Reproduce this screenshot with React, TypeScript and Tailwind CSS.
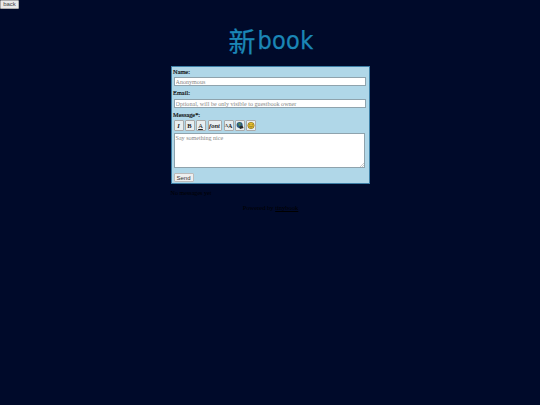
export default function App() {
  return (
    <div className="min-h-[405px] w-[540px] bg-[#000a2a] font-['Liberation_Serif',serif] text-black">
      <button className="block h-[9px] w-[19px] rounded-[1px] border border-[#aaa] bg-[#e9e9e9] font-['Liberation_Sans',sans-serif] text-[6px] leading-[7px] text-[#444]">
        back
      </button>

      {/* Logo */}
      <div className="mt-[14px] flex h-[36px] items-center justify-center gap-[2px] pl-[2px] text-[#1b86b6] [-webkit-text-stroke:0.25px_#1b86b6]">
        <span className="font-['Noto_Sans_CJK_SC',sans-serif] text-[27px] leading-[36px]">新</span>
        <span className="font-['DejaVu_Sans',sans-serif] text-[25px] leading-[36px] tracking-[0.3px] [font-stretch:condensed]">
          book
        </span>
      </div>

      {/* Form */}
      <div className="mx-auto mt-[7px] flex h-[118px] w-[199px] flex-col border border-[#3d7fa6] bg-[#b0d7e8] pl-[1px] pt-[1px] text-[6.3px] leading-[8px]">
        <label className="ml-[0.6px] text-[#111] [-webkit-text-stroke:0.2px_#111]">Name:</label>
        <input
          placeholder="Anonymous"
          className="ml-[1px] mt-[1px] h-[9px] w-[192px] border border-[#8fa3ad] bg-white px-[1px] text-[6.1px] leading-[7px] placeholder:text-[#888]"
        />
        <label className="ml-[0.6px] mt-[3px] text-[#111] [-webkit-text-stroke:0.2px_#111]">Email:</label>
        <input
          placeholder="Optional, will be only visible to guestbook owner"
          className="ml-[1px] mt-[2px] h-[9px] w-[192px] border border-[#8fa3ad] bg-white px-[1px] text-[6.1px] leading-[7px] placeholder:text-[#888]"
        />
        <label className="ml-[0.6px] mt-[3px] text-[#111] [-webkit-text-stroke:0.2px_#111]">Message*:</label>

        {/* Toolbar */}
        <div className="ml-[1px] mt-[1px] flex gap-[1px]">
          <ToolButton className="w-[10px] font-bold italic">I</ToolButton>
          <ToolButton className="w-[10px] font-bold">B</ToolButton>
          <ToolButton className="w-[10px] text-[#3a4ea0] underline">A</ToolButton>
          <ToolButton className="ml-[1px] w-[14px] text-[5px] font-bold italic">font</ToolButton>
          <ToolButton className="ml-[1px] w-[10px] font-bold">
            <span className="text-[4.5px]">A</span>
            <span className="text-[6px]">A</span>
          </ToolButton>
          <ToolButton className="w-[10px]">
            <svg viewBox="0 0 10 10" className="h-[9px] w-[9px]">
              <circle cx="4.5" cy="4.5" r="3.8" fill="#2c5c82" />
              <path d="M2.5 2.5 L5.5 2 L6 4 L4 5.5 Z" fill="#5a8a4a" />
              <path d="M4 6.5 L8 5 L9.5 8 L5 9.5 Z" fill="#2a2a2a" />
            </svg>
          </ToolButton>
          <ToolButton className="w-[10px]">
            <svg viewBox="0 0 10 10" className="h-[9px] w-[9px]">
              <circle cx="5" cy="5" r="4" fill="#e8c02c" stroke="#6e5a12" strokeWidth="0.7" />
              <circle cx="3.6" cy="4" r="0.6" fill="#333" />
              <circle cx="6.4" cy="4" r="0.6" fill="#333" />
              <path d="M3 6 Q5 8 7 6" fill="none" stroke="#333" strokeWidth="0.7" />
            </svg>
          </ToolButton>
        </div>

        <div className="relative ml-[1px] mt-[2px] h-[35px] w-[191px]">
          <textarea
            placeholder="Say something nice"
            className="block h-full w-full resize-none border border-[#8fa3ad] bg-white px-[1px] text-[6.1px] leading-[8px] placeholder:text-[#888]"
          />
          <svg viewBox="0 0 4 4" className="absolute bottom-[1px] right-[1px] h-[4px] w-[4px]">
            <path d="M0 4 L4 0 M2 4 L4 2" stroke="#999" strokeWidth="0.5" />
          </svg>
        </div>
        <button className="ml-[1px] mt-[5px] h-[9px] w-[20px] rounded-[1px] border border-[#bbb] bg-[#efefef] font-['Liberation_Sans',sans-serif] text-[6px] leading-[6px] text-[#333]">
          Send
        </button>
      </div>

      {/* Footer, dark text on the dark page */}
      <p className="mx-auto mt-[5px] w-[199px] text-[6.1px] leading-[8px]">No messages yet</p>
      <p className="mt-[7px] pl-[1px] text-center text-[6.5px] leading-[8px]">
        Powered by <span className="underline">tinybook</span>
      </p>
    </div>
  );
}

function ToolButton({ className, children }: { className: string; children: React.ReactNode }) {
  return (
    <span
      className={`flex h-[11px] items-center justify-center rounded-[1px] border border-[#aaa] bg-[#e8eef0] text-[6.5px] text-[#222] ${className}`}
    >
      {children}
    </span>
  );
}
